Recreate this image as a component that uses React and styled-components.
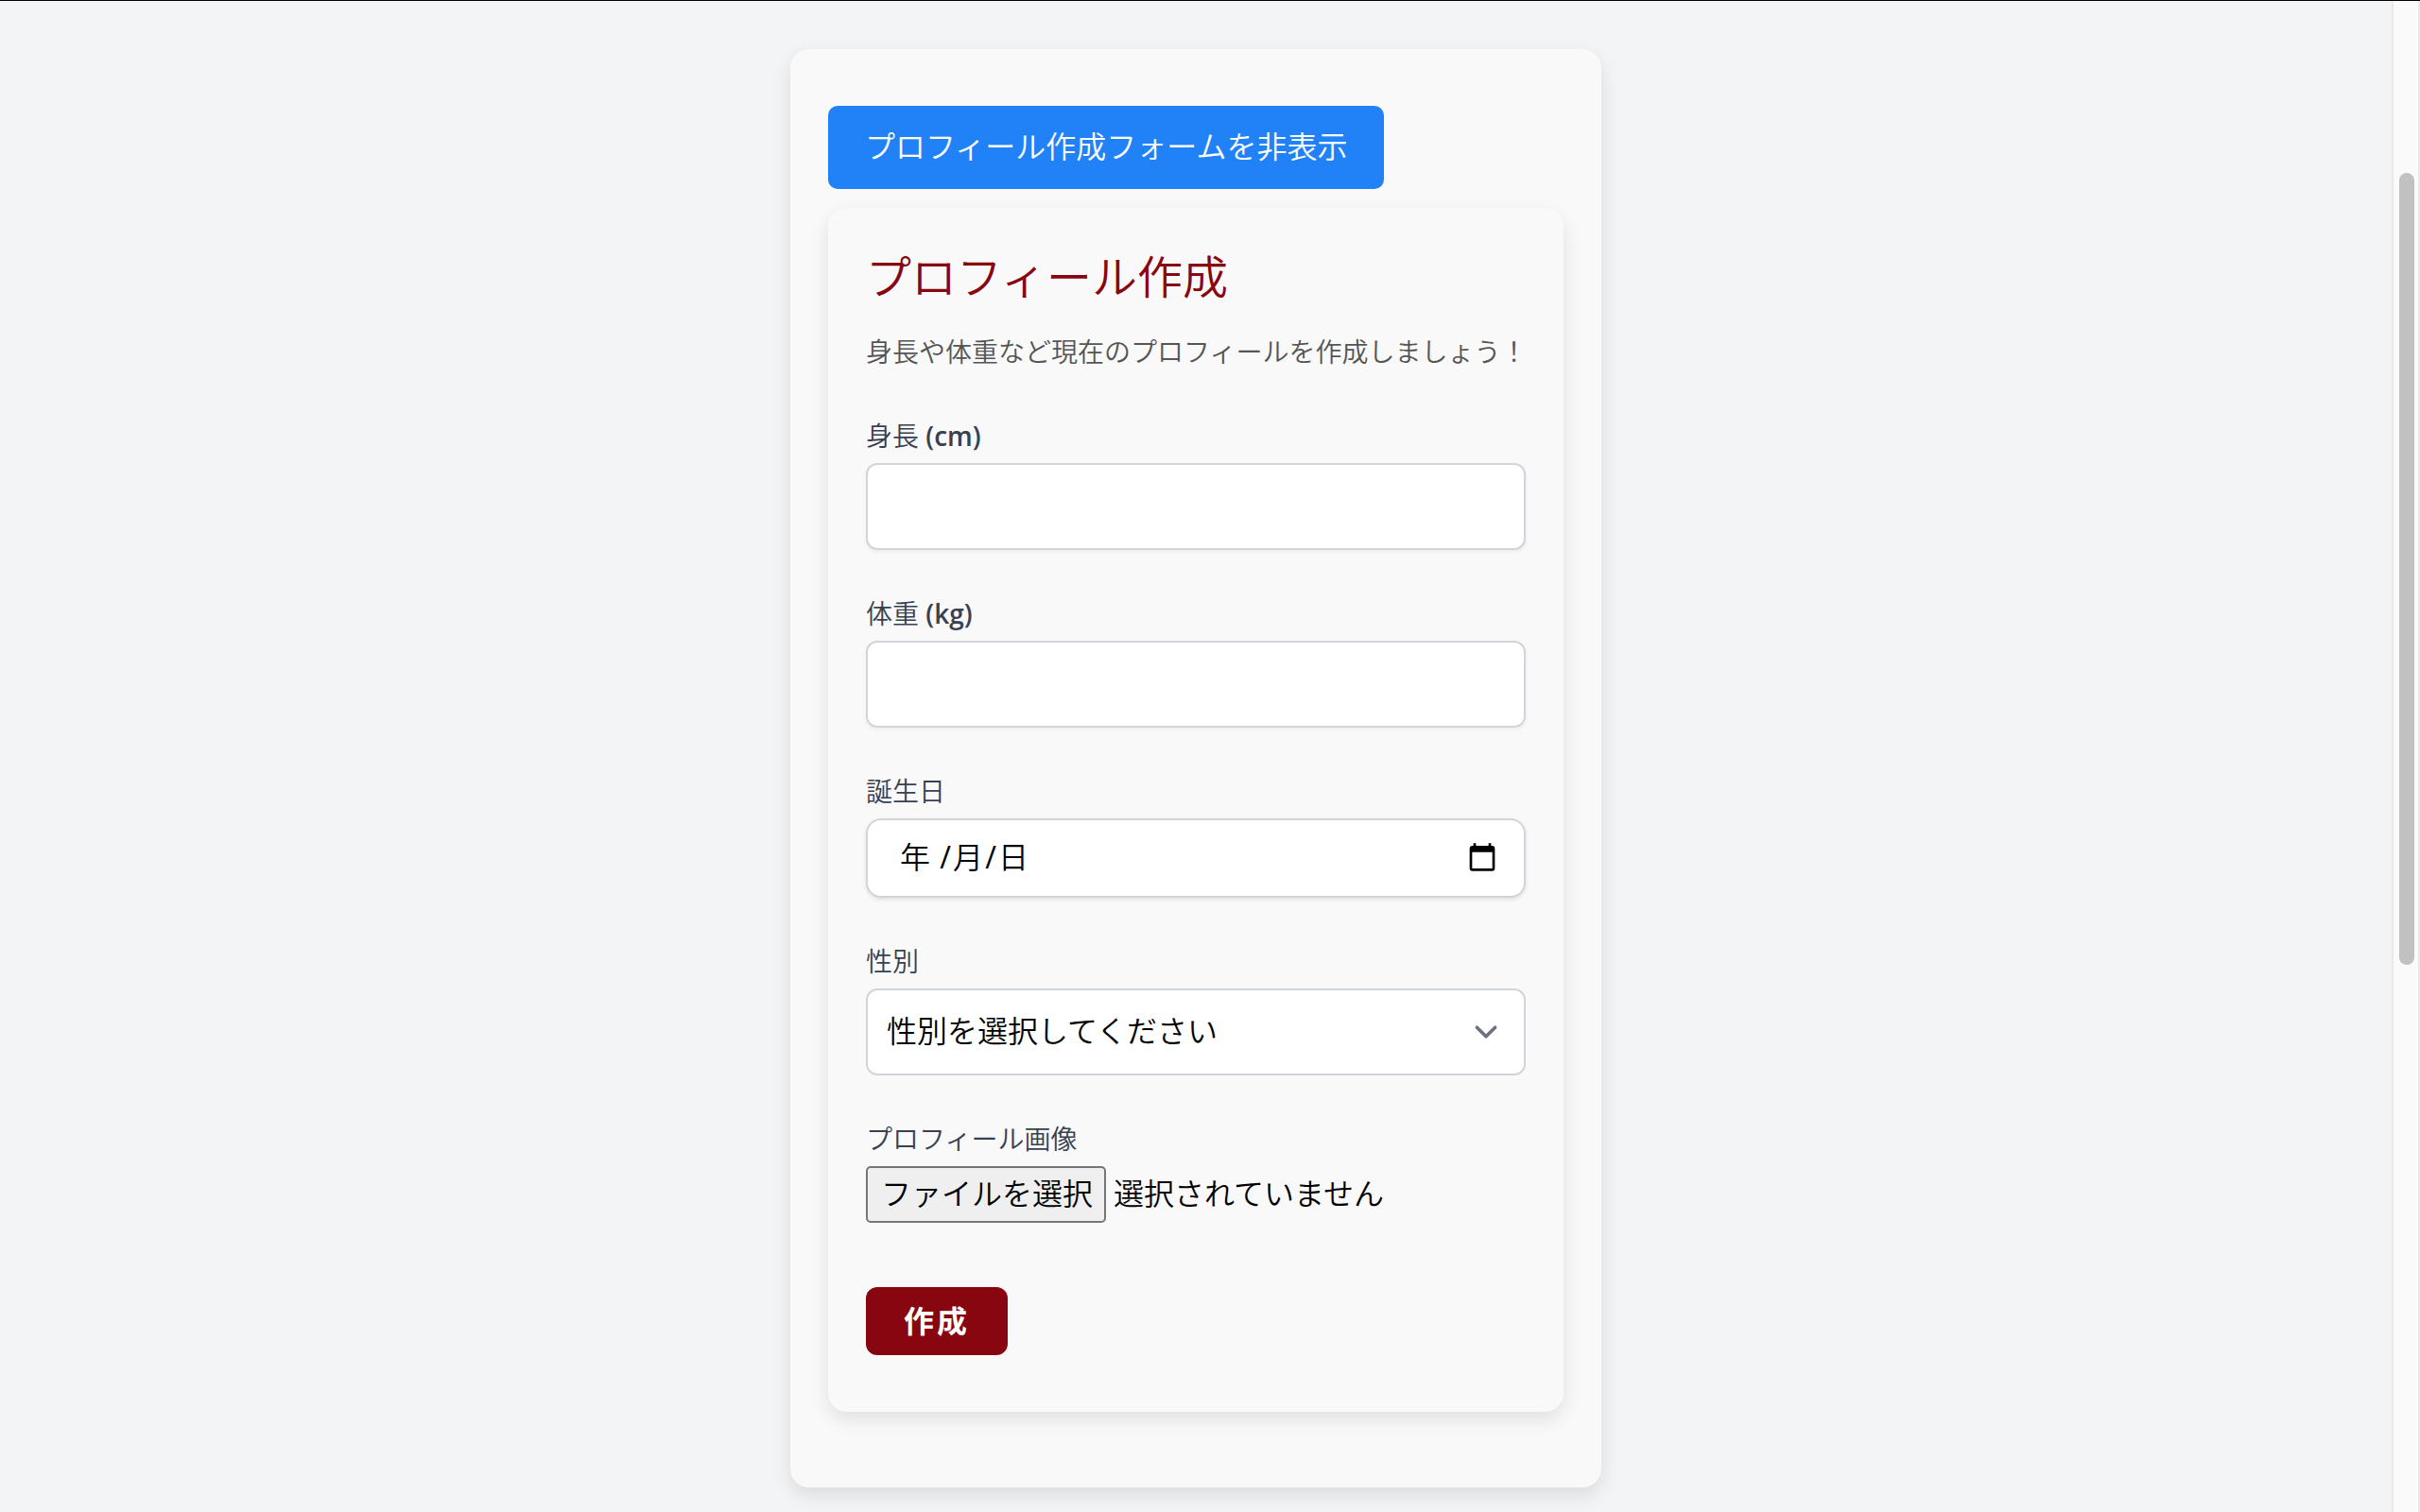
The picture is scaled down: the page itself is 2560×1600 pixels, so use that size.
import React, { useRef } from "react";
import styled, { createGlobalStyle } from "styled-components";

const GlobalStyle = createGlobalStyle`
  *, *::before, *::after { box-sizing: border-box; }
  body {
    margin: 0;
    background: #f3f4f6;
    color: #000;
    font-family: "Open Sans", "Noto Sans CJK JP DemiLight", "Noto Sans CJK JP", sans-serif;
    font-size: 32px;
    font-weight: 350;
    line-height: 48px;
  }
  button, input, select { font: inherit; color: inherit; margin: 0; }
`;

const Page = styled.div`
  display: flex;
  min-height: 100vh;
  border-top: 1px solid #000;
`;

const Main = styled.main`
  flex: 1;
  display: flex;
  justify-content: center;
  align-items: flex-start;
  padding: 51px 24px 24px;
`;

const surface = `
  background: #f9f9f9;
  border-radius: 20px;
  box-shadow: 0 8px 20px rgba(0, 0, 0, 0.1);
`;

const Card = styled.section`
  ${surface}
  width: 100%;
  max-width: 858px;
  padding: 60px 40px 80px;
`;

const ToggleButton = styled.button`
  display: block;
  padding: 19px 39px 21px;
  border: 0;
  border-radius: 10px;
  background: #2182f8;
  color: #fff;
  cursor: pointer;
`;

const Form = styled.form`
  ${surface}
  display: flex;
  flex-direction: column;
  gap: 48px;
  margin-top: 20px;
  padding: 40px 40px 60px;
`;

const Title = styled.h2`
  margin: 0 0 24px;
  color: #88060f;
  font-size: 48px;
  font-weight: 350;
  line-height: 66px;
`;

const Lead = styled.p`
  margin: 0;
  color: #555;
  font-size: 28px;
  line-height: 44px;
  white-space: nowrap;
`;

const Field = styled.div`
  display: flex;
  flex-direction: column;
  gap: 10px;
`;

const Label = styled.label`
  color: #374151;
  font-size: 28px;
  line-height: 38px;
`;

const Unit = styled.span`
  font-weight: 600;
`;

const control = `
  width: 100%;
  border: 2px solid #d1d5db;
  background: #fff;
`;

const TextInput = styled.input`
  ${control}
  height: 92px;
  padding: 0 24px;
  border-radius: 12px;
  box-shadow: 0 2px 4px rgba(0, 0, 0, 0.05);
`;

const DateBox = styled.div`
  ${control}
  display: flex;
  align-items: center;
  height: 84px;
  padding: 0 28px 2px 34px;
  border-radius: 16px;
  box-shadow: 0 2px 4px rgba(0, 0, 0, 0.1);
`;

const DatePart = styled.input`
  width: ${(p) => (p.$wide ? 40 : 32)}px;
  padding: 0;
  border: 0;
  background: none;
  outline: none;
  &::placeholder { color: #000; opacity: 1; }
`;

const Slash = styled.span`
  width: 16px;
  text-align: center;
  font-weight: 400;
`;

const IconButton = styled.button`
  display: flex;
  margin-left: auto;
  padding: 0;
  border: 0;
  background: none;
  cursor: pointer;
`;

const SelectBox = styled.div`
  display: grid;
  align-items: center;
  > * { grid-area: 1 / 1; }
  > svg { justify-self: end; margin-right: 18px; pointer-events: none; }
`;

const Select = styled.select`
  ${control}
  appearance: none;
  height: 92px;
  padding: 0 80px 2px 20px;
  border-radius: 12px;
`;

const FileRow = styled.div`
  display: flex;
  align-items: center;
  gap: 8px;
`;

const FileButton = styled.button`
  height: 60px;
  padding: 0 12px 2px 14px;
  border: 2px solid #767676;
  border-radius: 5px;
  background: #efefef;
`;

const FileName = styled.span`
  padding-bottom: 2px;
`;

const SubmitButton = styled.button`
  align-self: flex-start;
  margin-top: 20px;
  padding: 10px 40px 14px;
  border: 0;
  border-radius: 12px;
  background: #88060f;
  color: #fff;
  font-family: "Noto Sans CJK JP", sans-serif;
  font-weight: 700;
  letter-spacing: 3px;
  cursor: pointer;
`;

const Scrollbar = styled.div`
  display: flex;
  flex-direction: column;
  align-items: center;
  width: 30px;
  padding-left: 2px;
  border: solid #e8e8e8;
  border-width: 0 2px;
  background: #fafafa;
`;

const TrackSpace = styled.div`
  flex: ${(p) => p.$grow};
`;

const Thumb = styled.div`
  flex: 838;
  width: 16px;
  border-radius: 8px;
  background: #c1c1c1;
`;

const CalendarIcon = () => (
  <svg width="32" height="32" viewBox="0 0 24 24" aria-hidden="true">
    <path d="M20 3h-1V1h-2v2H7V1H5v2H4c-1.1 0-2 .9-2 2v16c0 1.1.9 2 2 2h16c1.1 0 2-.9 2-2V5c0-1.1-.9-2-2-2zm0 18H4V8h16v13z" />
  </svg>
);

const ChevronIcon = () => (
  <svg width="48" height="48" viewBox="0 0 20 20" fill="none" aria-hidden="true">
    <path d="M6 8l4 4 4-4" stroke="#6b7280" strokeWidth="1.5" strokeLinecap="round" strokeLinejoin="round" />
  </svg>
);

export default function App() {
  const fileRef = useRef(null);
  return (
    <>
      <GlobalStyle />
      <Page lang="ja">
        <Main>
          <Card>
            <ToggleButton type="button">プロフィール作成フォームを非表示</ToggleButton>
            <Form onSubmit={(e) => e.preventDefault()}>
              <header>
                <Title>プロフィール作成</Title>
                <Lead>身長や体重など現在のプロフィールを作成しましょう！</Lead>
              </header>
              <Field>
                <Label htmlFor="height">身長 <Unit>(cm)</Unit></Label>
                <TextInput id="height" inputMode="decimal" />
              </Field>
              <Field>
                <Label htmlFor="weight">体重 <Unit>(kg)</Unit></Label>
                <TextInput id="weight" inputMode="decimal" />
              </Field>
              <Field>
                <Label htmlFor="birthday">誕生日</Label>
                <DateBox>
                  <DatePart id="birthday" $wide placeholder="年" />
                  <Slash>/</Slash>
                  <DatePart placeholder="月" aria-label="月" />
                  <Slash>/</Slash>
                  <DatePart placeholder="日" aria-label="日" />
                  <IconButton type="button" aria-label="カレンダー"><CalendarIcon /></IconButton>
                </DateBox>
              </Field>
              <Field>
                <Label htmlFor="gender">性別</Label>
                <SelectBox>
                  <Select id="gender" defaultValue="">
                    <option value="">性別を選択してください</option>
                    <option value="male">男性</option>
                    <option value="female">女性</option>
                  </Select>
                  <ChevronIcon />
                </SelectBox>
              </Field>
              <Field>
                <Label htmlFor="avatar">プロフィール画像</Label>
                <FileRow>
                  <input id="avatar" ref={fileRef} type="file" accept="image/*" hidden />
                  <FileButton type="button" onClick={() => fileRef.current.click()}>ファイルを選択</FileButton>
                  <FileName>選択されていません</FileName>
                </FileRow>
              </Field>
              <SubmitButton type="submit">作成</SubmitButton>
            </Form>
          </Card>
        </Main>
        <Scrollbar aria-hidden="true">
          <TrackSpace $grow={182} />
          <Thumb />
          <TrackSpace $grow={579} />
        </Scrollbar>
      </Page>
    </>
  );
}
